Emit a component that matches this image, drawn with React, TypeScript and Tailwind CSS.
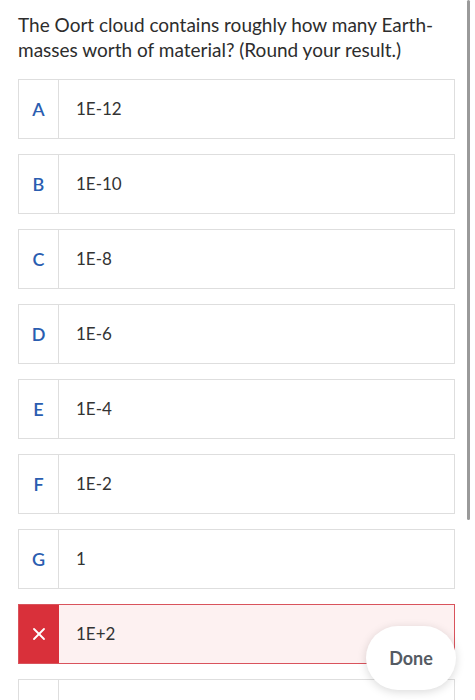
import { X } from 'lucide-react';

const options = [
  { letter: 'A', value: '1E-12' },
  { letter: 'B', value: '1E-10' },
  { letter: 'C', value: '1E-8' },
  { letter: 'D', value: '1E-6' },
  { letter: 'E', value: '1E-4' },
  { letter: 'F', value: '1E-2' },
  { letter: 'G', value: '1' },
  { letter: 'H', value: '1E+2', wrong: true },
  { letter: '', value: '' },
];

export default function App() {
  return (
    <div className="relative h-[700px] w-[475px] overflow-hidden bg-white font-['Lato',sans-serif] text-[#333]">
      <div className="px-[18px] pt-[12px]">
        <h1 className="w-[420px] text-[19px] leading-[25px] text-[#2d2d2d]">
          The Oort cloud contains roughly how many Earth-masses worth of material? (Round your result.)
        </h1>

        <div className="mt-[17px] flex w-[437px] flex-col gap-[15px]">
          {options.map((o, i) => (
            <div
              key={i}
              className={`flex h-[60px] shrink-0 border ${o.wrong ? 'border-[#d9535c] bg-[#fdf1f1]' : 'border-[#dedede] bg-white'}`}
            >
              <div
                className={`flex w-[40px] shrink-0 items-center justify-center border-r ${o.wrong ? 'border-[#d9303a] bg-[#d9303a] text-white' : 'border-[#dedede] text-[#2a5db0]'} text-[18px] font-semibold`}
              >
                {o.wrong ? <X size={20} strokeWidth={2.2} /> : o.letter}
              </div>
              <div className="flex items-center pl-[17px] text-[17px] text-[#333]">{o.value}</div>
            </div>
          ))}
        </div>
      </div>

      <div className="absolute right-[19px] top-[626px] flex h-[64px] w-[90px] items-center justify-center rounded-full bg-white text-[18px] font-bold text-[#555b63] shadow-[0_2px_10px_rgba(0,0,0,0.15)]">
        Done
      </div>

      <div className="absolute right-[5px] top-0 h-[520px] w-[3px] rounded-full bg-[#9a9a9a]" />
    </div>
  );
}
